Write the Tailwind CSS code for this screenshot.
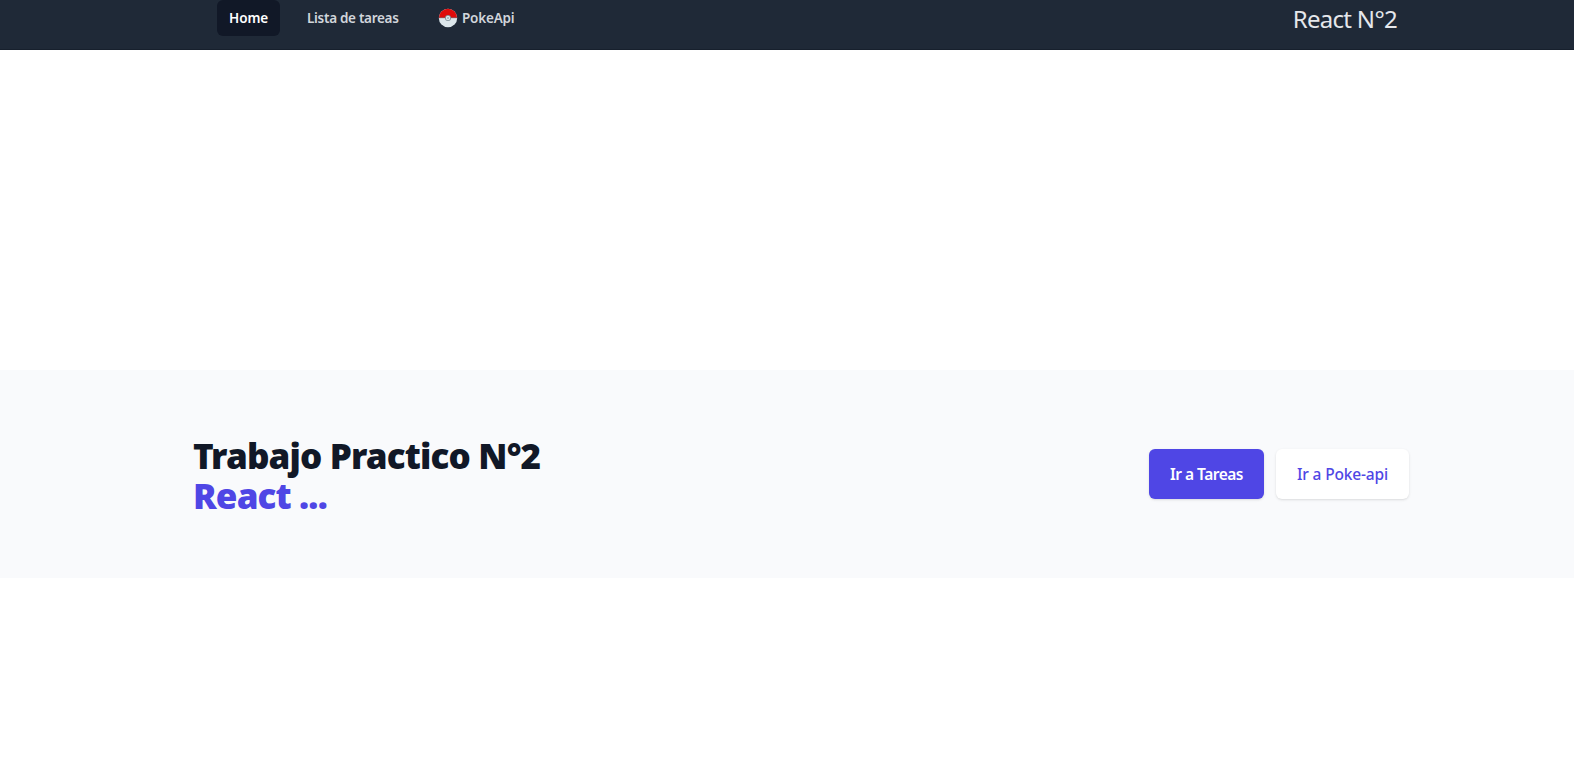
<!DOCTYPE html>
<html lang="es">
<head>
<meta charset="utf-8">
<title>React N°2</title>
<script src="https://cdn.jsdelivr.net/npm/@tailwindcss/browser@4"></script>
</head>
<body class="h-[760px] overflow-hidden bg-white font-['Noto_Sans',sans-serif] whitespace-nowrap">
<nav class="flex h-[50px] items-start justify-between border-b border-[#17202d] bg-[#1f2937] pl-[217px] pr-[177px]">
  <div class="flex text-[13.5px] leading-5 font-semibold text-[#d1d5db]">
    <a class="h-9 w-[63px] rounded-md bg-[#111827] px-3 py-2 text-white"><span class="inline-block tracking-[-0.05px]">Home</span></a>
    <a class="ml-[15px] w-[116px] px-3 py-2"><span class="inline-block tracking-[-0.3px]">Lista de tareas</span></a>
    <a class="ml-[15px] flex items-center gap-1 px-3 py-2">
      <svg class="-my-px size-5" viewBox="0 0 20 20">
        <circle cx="10" cy="10" r="9.200" fill="#dce6eb"/>
        <path d="M.8 10a9.200 9.200 0 0 1 18.400 0z" fill="#de0b0b"/>
        <path d="M1 9.700h18" stroke="#8b5a60" stroke-width=".8"/>
        <circle cx="10" cy="10" r="3" fill="#7e8e97"/>
        <circle cx="10" cy="10" r="2.200" fill="#dce6eb"/>
        <circle cx="10" cy="10" r="1" fill="#a0afb6"/>
      </svg>
      <span class="tracking-[-0.2px]">PokeApi</span>
    </a>
  </div>
  <div class="pt-[3px] text-2xl leading-8 text-[#e5e7eb]"><span class="inline-block tracking-[-0.7px]">React N°2</span></div>
</nav>
<section class="mt-80 flex h-[208px] items-center justify-between bg-[#f9fafc] pl-[193px] pr-[165px]">
  <h2 class="pt-[3px] text-[35px] leading-10 font-black tracking-[-0.85px] text-[#111827]">
    <span class="block">Trabajo Practico N°2</span>
    <span class="block text-[#4f46e5]">React ...</span>
  </h2>
  <div class="flex gap-3 text-[15.5px] leading-6">
    <a class="flex h-[50px] w-[115px] items-center justify-center rounded-md bg-[#4f46e5] font-semibold text-white shadow-sm"><span class="tracking-[-0.5px]">Ir a Tareas</span></a>
    <a class="flex h-[50px] w-[133px] items-center justify-center rounded-md bg-white font-medium text-[#4f46e5] shadow-sm"><span class="tracking-[-0.15px]">Ir a Poke-api</span></a>
  </div>
</section>
</body>
</html>
